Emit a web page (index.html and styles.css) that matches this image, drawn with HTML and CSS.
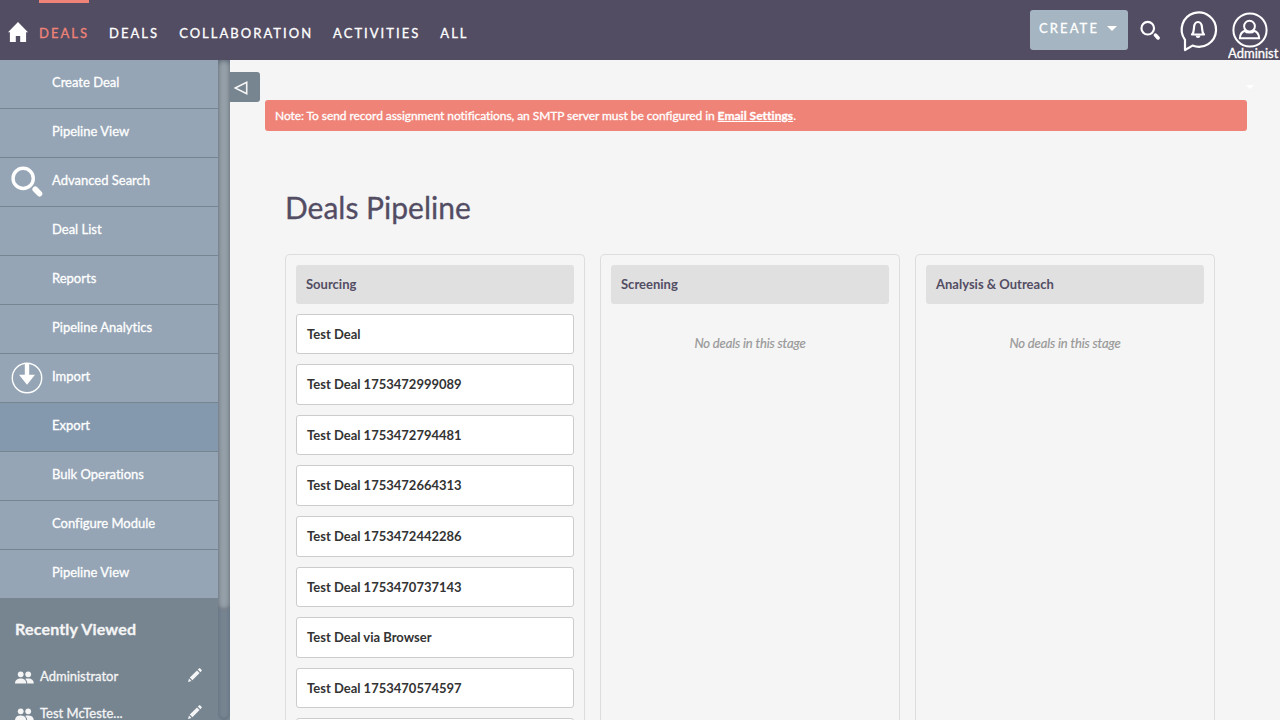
FILE: index.html
```html
<!DOCTYPE html>
<html lang="en">
<head>
<meta charset="utf-8">
<title>Deals Pipeline</title>
<link rel="stylesheet" href="styles.css">
</head>
<body>
<header class="topbar">
  <svg class="home" viewBox="0 0 20 20"><path d="M10 0 L20 10.2 H18.1 V20 H12.2 V14 H7.8 V20 H1.9 V10.2 H0 Z"/></svg>
  <nav class="nav">
    <a class="active">DEALS</a><a>DEALS</a><a>COLLABORATION</a><a>ACTIVITIES</a><a>ALL</a>
  </nav>
  <div class="tools">
    <div class="create">CREATE<span class="caret"></span></div>
    <svg class="search" viewBox="0 0 32 31"><circle cx="11.8" cy="12" r="9.6"/><path d="M23.5 22.5 L27.6 26.8"/></svg>
    <svg class="bell" viewBox="0 0 38 42"><path class="line" d="M6 28.800 A17.200 17.200 0 1 1 13.500 34.600 L6 39 Z"/><path class="line" d="M13 23.500 C15 21.500 14.800 19 15 16.500 C15.300 12.500 17 11 19 11 C21 11 22.700 12.500 23 16.500 C23.200 19 23 21.500 25 23.500 Z"/><path class="fill" d="M16.500 24.500 h5 q-.5 2.500 -2.500 2.500 t-2.500 -2.500z"/></svg>
    <div class="user">
      <svg viewBox="0 0 36 36"><circle cx="18" cy="18" r="16.600"/><circle cx="17.500" cy="14.200" r="5.400"/><path d="M12.800 18.800 C9.500 20 8 22.500 7.900 26.300 H27.200 C27 22.500 25.500 20 22.200 18.800 C20.500 21.200 14.500 21.200 12.800 18.800 Z"/></svg>
      <span>Administ</span>
    </div>
  </div>
</header>
<div class="body">
  <aside class="sidebar">
    <div class="side-content">
      <ul class="menu">
        <li>Create Deal</li>
        <li>Pipeline View</li>
        <li><svg class="micon" viewBox="0 0 32 31"><circle cx="11.800" cy="12" r="9.800"/><path d="M23.500 22.500 L27.600 26.800"/></svg>Advanced Search</li>
        <li>Deal List</li>
        <li>Reports</li>
        <li>Pipeline Analytics</li>
        <li><svg class="micon import" viewBox="0 0 32 32"><circle cx="16" cy="16" r="14.700"/><path d="M13.800 2 H18.200 V12.700 H24 L16 22.800 L8 12.700 H13.800 Z"/></svg>Import</li>
        <li class="hover">Export</li>
        <li>Bulk Operations</li>
        <li>Configure Module</li>
        <li>Pipeline View</li>
      </ul>
      <section class="recent">
        <h2>Recently Viewed</h2>
        <div class="rrow">
          <svg class="people" viewBox="0 0 19 13"><circle cx="5.700" cy="3.300" r="2.900"/><circle cx="13.200" cy="3.300" r="2.900"/><path d="M0 12.500 C0 9 2.500 7.400 5.700 7.400 C9 7.400 11.200 9 11.300 12.500 Z M10.200 8 C11 7.500 12 7.400 13.200 7.400 C16.500 7.400 18.800 9 18.800 12.500 H12.200 C12.200 10.500 11.500 9 10.200 8 Z"/></svg>
          <span>Administrator</span>
          <svg class="pencil" viewBox="0 0 14 14"><path d="M0 14 L1 10.500 L3.500 13 Z M1.800 9.600 L9 2.400 L11.600 5 L4.400 12.200 Z M9.800 1.600 L11.200 .3 Q11.600 0 12 .3 L13.700 2 Q14 2.400 13.700 2.800 L12.400 4.200 Z"/></svg>
        </div>
        <div class="rrow">
          <svg class="people" viewBox="0 0 19 13"><circle cx="5.700" cy="3.300" r="2.900"/><circle cx="13.200" cy="3.300" r="2.900"/><path d="M0 12.500 C0 9 2.500 7.400 5.700 7.400 C9 7.400 11.200 9 11.300 12.500 Z M10.200 8 C11 7.500 12 7.400 13.200 7.400 C16.500 7.400 18.800 9 18.800 12.500 H12.200 C12.200 10.500 11.500 9 10.200 8 Z"/></svg>
          <span>Test McTeste...</span>
          <svg class="pencil" viewBox="0 0 14 14"><path d="M0 14 L1 10.500 L3.500 13 Z M1.800 9.600 L9 2.400 L11.600 5 L4.400 12.200 Z M9.800 1.600 L11.200 .3 Q11.600 0 12 .3 L13.700 2 Q14 2.400 13.700 2.800 L12.400 4.200 Z"/></svg>
        </div>
      </section>
    </div>
    <div class="track"><div class="thumb"></div></div>
  </aside>
  <main class="main">
    <div class="toggle"><svg viewBox="0 0 14 14"><path d="M1.200 7 L12.700 1.300 V12.700 Z"/></svg></div>
    <span class="caret ghost"></span>
    <div class="note">Note: To send record assignment notifications, an SMTP server must be configured in <a>Email Settings</a>.</div>
    <h1>Deals Pipeline</h1>
    <div class="board">
      <section class="stage">
        <h3>Sourcing</h3>
        <div class="card">Test Deal</div>
        <div class="card">Test Deal 1753472999089</div>
        <div class="card">Test Deal 1753472794481</div>
        <div class="card">Test Deal 1753472664313</div>
        <div class="card">Test Deal 1753472442286</div>
        <div class="card">Test Deal 1753470737143</div>
        <div class="card">Test Deal via Browser</div>
        <div class="card">Test Deal 1753470574597</div>
        <div class="card"></div>
      </section>
      <section class="stage"><h3>Screening</h3><p>No deals in this stage</p></section>
      <section class="stage"><h3>Analysis &amp; Outreach</h3><p>No deals in this stage</p></section>
    </div>
  </main>
</div>
</body>
</html>
```
FILE: styles.css
```css
* { box-sizing: border-box; }
body {
  margin: 0;
  height: 720px;
  overflow: hidden;
  background: #f5f5f5;
  font: 13px/1.42857 Lato, sans-serif;
  font-variant-ligatures: none;
  color: #333;
}
.topbar {
  display: flex;
  height: 60px;
  background: #534d64;
  color: #fff;
}
.topbar, .side-content, .note { -webkit-text-stroke: 0.3px currentColor; }
.home { width: 20px; height: 20px; margin: 22px 0 0 8px; fill: #fff; flex: none; }
.nav { display: flex; gap: 20px; margin-left: 11px; letter-spacing: 2.03px; }
.nav a { padding-top: 21px; border-top: 3px solid transparent; height: 60px; }
.nav .active { color: #f08377; border-color: #f08377; }
.tools { display: flex; margin-left: auto; width: 250px; flex: none; }
.create {
  display: flex;
  align-items: center;
  width: 98px;
  height: 40px;
  margin-top: 10px;
  padding: 0 0 4px 9px;
  background: #a5b5c1;
  border-radius: 3px;
  letter-spacing: 2.1px;
}
.caret {
  width: 0;
  height: 0;
  margin-left: 8px;
  border: 5.5px solid transparent;
  border-top-color: #fff;
  border-bottom: 0;
}
.search { width: 21px; height: 21px; margin: 20px 0 0 12px; flex: none; }
.search, .micon { fill: none; stroke: #fff; stroke-width: 3.3; stroke-linecap: round; }
.search path, .micon path { stroke-width: 5.5; }
.bell { width: 38px; height: 42px; margin: 11px 0 0 18px; flex: none; overflow: visible; }
.bell .line { fill: none; stroke: #fff; stroke-width: 2.2; stroke-linejoin: round; }
.bell .fill { fill: #fff; }
.user { width: 52px; margin-left: 11px; overflow: hidden; white-space: nowrap; flex: none; }
.user svg { display: block; width: 36px; height: 36px; margin: 12px 0 0 4px; fill: none; stroke: #fff; stroke-width: 2; }
.user span { display: block; margin-top: -4px; line-height: 18px; }
.body { display: flex; height: 660px; }
.sidebar { display: flex; width: 230px; flex: none; background: #778591; }
.side-content { width: 218px; height: 660px; overflow: hidden; color: #fff; }
.menu { margin: 0; padding: 0; list-style: none; }
.menu li {
  position: relative;
  height: 49px;
  padding: 13px 0 0 52px;
  background: #95a5b5;
  border-bottom: 1px solid #778591;
}
.menu .hover { background: #8499ae; }
.micon { position: absolute; left: 11px; top: 8px; width: 33px; height: 32px; }
.import { left: 11px; top: 8px; width: 32px; height: 32px; stroke-width: 1.4; }
.import path { fill: #fff; stroke: none; }
.recent { color: #f5f5f5; padding-left: 15px; }
.recent h2 { margin: 18px 0 24px; font-size: 16px; line-height: 23px; font-weight: 700; letter-spacing: 0.18px; }
.rrow { display: flex; height: 37px; line-height: 24px; }
.people { width: 19px; height: 13px; margin: 7px 6px 0 0; fill: #f5f5f5; }
.pencil { width: 14px; height: 14px; margin: 4px 16px 0 auto; fill: #f5f5f5; }
.track { width: 12px; height: 660px; background: #778591; border-radius: 0 0 6px 6px; box-shadow: inset 0 0 5px #5f6b7a; }
.thumb { height: 550px; border-radius: 6px; background: #95a0a9; box-shadow: inset 0 0 5px #5c646e; }
.main { position: relative; flex: 1; padding: 40px 33px 0 35px; }
.toggle {
  position: absolute;
  left: 0;
  top: 12px;
  width: 30px;
  height: 30px;
  background: #778591;
  border-radius: 0 3px 3px 0;
}
.toggle svg { display: block; width: 14px; height: 14px; margin: 9px 0 0 4px; fill: none; stroke: #f5f5f5; stroke-width: 1.6; }
.ghost { position: absolute; right: 26px; top: 25px; border-width: 4px; border-bottom: 0; }
.note {
  height: 31px;
  padding: 0 10px;
  background: #f08377;
  border-radius: 3px;
  color: #fff;
  font-size: 12px;
  line-height: 31px;
  letter-spacing: -0.073px;
}
.note a { font-weight: 700; text-decoration: underline; letter-spacing: 0.03px; }
h1 { margin: 55px 0 0 20px; font-size: 30px; font-weight: 400; line-height: 43px; color: #534d64; -webkit-text-stroke: 0.3px currentColor; }
.board { display: flex; gap: 15px; margin: 25px 0 0 20px; }
.stage {
  width: 300px;
  height: 466px;
  overflow: hidden;
  flex: none;
  padding: 10px 10px 0;
  border: 1px solid #ddd;
  border-bottom: 0;
  border-radius: 5px 5px 0 0;
}
.stage h3 {
  margin: 0 0 10px;
  padding: 10px;
  background: #e0e0e0;
  border-radius: 3px;
  color: #534d64;
  font-size: 13px;
  font-weight: 700;
}
.card {
  height: 40.61px;
  margin-bottom: 10px;
  padding: 10px;
  background: #fff;
  border: 1px solid #ccc;
  border-radius: 3px;
  font-weight: 700;
}
.stage p { margin: 0; padding: 20px; text-align: center; font-style: italic; color: #999; letter-spacing: -0.13px; -webkit-text-stroke: 0.2px currentColor; }
```
